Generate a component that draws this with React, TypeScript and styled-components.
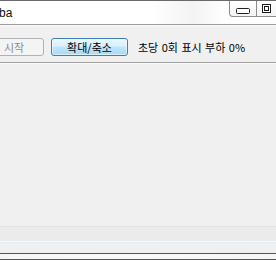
import React from "react";
import styled, { createGlobalStyle } from "styled-components";

const Global = createGlobalStyle`
  html, body { margin: 0; padding: 0; }
  body {
    width: 276px;
    height: 260px;
    overflow: hidden;
    background: #f0f0f0;
    font-family: "Noto Sans CJK KR", "Noto Sans", sans-serif;
  }
`;

const Window = styled.div`
  display: flex;
  flex-direction: column;
  width: 276px;
  height: 260px;
  overflow: hidden;
  background: #f0f0f0;
`;

const TitleBar = styled.div`
  display: flex;
  align-items: flex-start;
  height: 23px;
  border-top: 1px solid #6a6a6a;
  border-bottom: 1px solid #9c9c9c;
  background: linear-gradient(90deg, #ffffff 0%, #ffffff 55%, #f3f3f3 70%, #ffffff 82%);
  overflow: hidden;
`;

const TitleText = styled.span`
  font-family: "Liberation Sans", Arial, sans-serif;
  font-size: 12px;
  line-height: 14px;
  color: #111;
  margin: 5px 0 0 -1px;
`;

const Caption = styled.div`
  display: flex;
  margin-left: auto;
  margin-right: -8px;
  height: 15px;
  border: 1px solid #8c8c8c;
  border-top: none;
  border-bottom-left-radius: 4px;
  background: linear-gradient(#ffffff, #f4f4f4);
`;

const CapButton = styled.div<{ $w: number; $divider?: boolean; $pad?: number }>`
  width: ${(p) => p.$w}px;
  display: flex;
  align-items: center;
  justify-content: ${(p) => (p.$pad !== undefined ? "flex-start" : "center")};
  padding-left: ${(p) => p.$pad ?? 0}px;
  box-sizing: border-box;
  border-left: ${(p) => (p.$divider ? "1px solid #8c8c8c" : "none")};
`;

const TopGap = styled.div`
  height: 2px;
  background: linear-gradient(#f9f9f9, #f3f3f3);
`;

const Toolbar = styled.div`
  display: flex;
  align-items: flex-start;
  height: 35px;
  box-sizing: content-box;
  padding-top: 0;
  margin-left: -16px;
  border-bottom: 1px solid #a0a0a0;
`;

const Btn = styled.div<{ $hot?: boolean; $w: number }>`
  box-sizing: border-box;
  width: ${(p) => p.$w}px;
  height: 18px;
  margin-top: 11px;
  margin-right: 7px;
  border-radius: 3px;
  display: flex;
  align-items: center;
  justify-content: center;
  font-size: 11px;
  line-height: 12px;
  border: 1px solid ${(p) => (p.$hot ? "#3c7fb1" : "#adb2b5")};
  color: ${(p) => (p.$hot ? "#000" : "#8b8b8b")};
  background: ${(p) =>
    p.$hot
      ? "linear-gradient(#eaf6fd 0%, #d9f0fc 45%, #bee6fd 50%, #a7d9f5 100%)"
      : "#f4f4f4"};
  box-shadow: inset 0 0 0 1px ${(p) => (p.$hot ? "rgba(255,255,255,0.6)" : "transparent")};
`;

const Status = styled.span`
  margin-top: 14px;
  margin-left: 3px;
  font-size: 11px;
  line-height: 12px;
  color: #000;
  white-space: nowrap;
  word-spacing: 1px;
`;

const WhiteLine = styled.div`
  height: 1px;
  background: #fbfbfb;
`;

const Main = styled.div`
  flex: 1;
  background: #f0f0f0;
`;

const StatusBand = styled.div`
  height: 14px;
  border-top: 1px solid #e3e3e3;
  background: #ebebeb;
`;

const BandBottom = styled.div`
  height: 1px;
  background: #fafafa;
`;

const BlueLine = styled.div`
  height: 1px;
  background: #e2ecf4;
`;

const Filler = styled.div`
  height: 10px;
  background: #f0f0f0;
`;

const DarkLine = styled.div`
  height: 1px;
  background: #555555;
`;

const Strip = styled.div`
  height: 5px;
  background: linear-gradient(90deg, #f6f6f6 0%, #fafafa 40%, #f6f6f6 100%);
`;

export default function App() {
  return (
    <Window>
      <Global />
      <TitleBar>
        <TitleText>ba</TitleText>
        <Caption>
          <CapButton $w={26}>
            <svg width="14" height="6" viewBox="0 0 14 6" style={{ marginTop: 4 }}>
              <rect x="0.5" y="0.5" width="13" height="5" rx="1" fill="#fff" stroke="#1e1e1e" />
            </svg>
          </CapButton>
          <CapButton $w={27} $divider $pad={5}>
            <svg width="9" height="9" viewBox="0 0 9 9">
              <rect x="0.5" y="0.5" width="8" height="8" fill="#fff" stroke="#1e1e1e" />
              <rect x="2.5" y="2.5" width="4" height="4" fill="#fff" stroke="#1e1e1e" />
            </svg>
          </CapButton>
        </Caption>
      </TitleBar>
      <TopGap />
      <Toolbar>
        <Btn $w={60}>시작</Btn>
        <Btn $w={77} $hot>확대/축소</Btn>
        <Status>초당 0회 표시 부하 0%</Status>
      </Toolbar>
      <WhiteLine />
      <Main />
      <StatusBand />
      <BandBottom />
      <BlueLine />
      <Filler />
      <DarkLine />
      <Strip />
      <DarkLine />
    </Window>
  );
}
